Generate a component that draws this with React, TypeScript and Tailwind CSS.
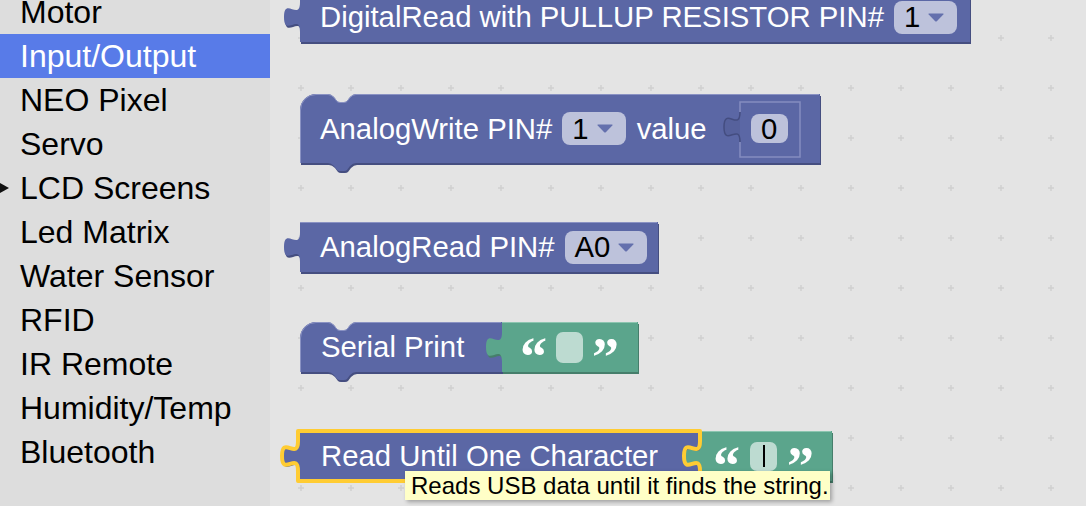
import React from "react";

type Hole = { x: number; y: number; w: number; h: number };
type ShapeOpts = {
  w: number;
  h: number;
  output?: boolean;
  prev?: boolean;
  next?: boolean;
  rightTab?: boolean;
  hole?: Hole;
};
type Palette = { fill: string; dark: string; light: string };

const PURPLE: Palette = { fill: "#5b67a5", dark: "#454e80", light: "#8a92c3" };
const GREEN: Palette = { fill: "#5ba58c", dark: "#467e6b", light: "#8cc5b0" };

// room on the left of each svg for the output tab
const X = 16;

const outline = (o: ShapeOpts) => {
  const { w, h } = o;
  let d = "";
  let top = "";
  if (o.prev) {
    const notch = (y: number) =>
      `H ${X + 28} Q ${X + 31},${y} ${X + 34},${y + 3} L ${X + 37},${y + 7} Q ${X + 38},${y + 8} ${X + 40},${y + 8} H ${X + 44} Q ${X + 46},${y + 8} ${X + 47},${y + 7} L ${X + 50},${y + 3} Q ${X + 53},${y} ${X + 56},${y}`;
    d += `M ${X},16 A 16,16 0 0 1 ${X + 16},0 ${notch(0)}`;
    top = `M ${X + 0.5},${h} V 16 A 15.5,15.5 0 0 1 ${X + 16},0.5 ${notch(0.5)} H ${X + w - 1}`;
  } else {
    d += `M ${X},0`;
    top = `M ${X},0.5 H ${X + w - 1}`;
  }
  d += ` H ${X + w}`;
  if (o.rightTab) {
    const r = X + w;
    d += ` V 10 C ${r},30 ${r - 16},4 ${r - 16},25 C ${r - 16},46 ${r},20 ${r},40`;
  }
  d += ` V ${h}`;
  if (o.next) {
    d += ` H ${X + 56} Q ${X + 53},${h} ${X + 50},${h + 3} L ${X + 47},${h + 7} Q ${X + 46},${h + 8} ${X + 44},${h + 8} H ${X + 40} Q ${X + 38},${h + 8} ${X + 37},${h + 7} L ${X + 34},${h + 3} Q ${X + 31},${h} ${X + 28},${h}`;
  }
  d += ` H ${X}`;
  if (o.output) d += ` V 40 C ${X},20 0,46 0,25 C 0,4 ${X},30 ${X},10`;
  d += " Z";
  return { d, top };
};

const Shape = ({ o, c, selected }: { o: ShapeOpts; c: Palette; selected?: boolean }) => {
  const { d, top } = outline(o);
  const hl = o.hole;
  return (
    <svg
      className="absolute top-0 left-[-16px] overflow-visible pointer-events-none"
      width={o.w + X + 4}
      height={o.h + 12}
    >
      <path d={d} fill={c.dark} transform="translate(1,2)" />
      <path d={d} fill={c.fill} />
      <path d={top} fill="none" stroke={c.light} strokeWidth={1} />
      {hl && (
        <>
          <path
            d={`M ${X + hl.x},${hl.y + 10} V ${hl.y} H ${X + hl.x + hl.w} V ${hl.y + hl.h} H ${X + hl.x} V ${hl.y + 40}`}
            fill="none"
            stroke="#858dc0"
            strokeWidth={1.5}
          />
          <path
            d={`M ${X + hl.x},${hl.y + 40} C ${X + hl.x},${hl.y + 20} ${X + hl.x - 16},${hl.y + 46} ${X + hl.x - 16},${hl.y + 25} C ${X + hl.x - 16},${hl.y + 4} ${X + hl.x},${hl.y + 30} ${X + hl.x},${hl.y + 10}`}
            fill="#56619c"
            stroke="#444d80"
            strokeWidth={1.5}
          />
        </>
      )}
      {selected && (
        <path d={d} fill="none" stroke="#ffcc33" strokeWidth={4} strokeLinejoin="round" />
      )}
    </svg>
  );
};

const Arrow = () => (
  <svg width="16" height="9" viewBox="0 0 16 9">
    <path d="M1,0.5 H15 Q16,0.5 15.3,1.4 L8.8,8.2 Q8,9 7.2,8.2 L0.7,1.4 Q0,0.5 1,0.5 Z" fill="#6470ad" />
  </svg>
);

const Dropdown = ({ value, className = "" }: { value: string; className?: string }) => (
  <div
    className={`flex items-center h-[33px] rounded-[8px] bg-[#bdc2db] pl-[10px] pr-[13px] gap-[8px] text-black ${className}`}
  >
    <span className="text-[29.3px] leading-none">{value}</span>
    <Arrow />
  </div>
);

const Quote = ({ ch }: { ch: string }) => (
  <span className="font-['Liberation_Serif',serif] font-bold text-[54px] leading-none text-white translate-y-[10px]">
    {ch}
  </span>
);

const categories = [
  "Motor",
  "Input/Output",
  "NEO Pixel",
  "Servo",
  "LCD Screens",
  "Led Matrix",
  "Water Sensor",
  "RFID",
  "IR Remote",
  "Humidity/Temp",
  "Bluetooth",
];

const Sidebar = () => (
  <div className="w-[270px] h-full bg-[#dddddd] flex flex-col shrink-0">
    <div className="flex flex-col -mt-[10px]">
      {categories.map((cat) => (
        <div
          key={cat}
          className={`h-[44px] flex items-center text-[32px] leading-none ${
            cat === "Input/Output" ? "bg-[#587be8] text-white" : "text-black"
          }`}
        >
          <div className="w-[20px] h-full flex items-center">
            {cat === "LCD Screens" && (
              <svg width="9" height="10" viewBox="0 0 9 10">
                <polygon points="0,0 9,5 0,10" fill="#111" />
              </svg>
            )}
          </div>
          <span>{cat}</span>
        </div>
      ))}
    </div>
  </div>
);

const Grid = () => (
  <svg className="absolute inset-0 w-full h-full">
    <defs>
      <pattern id="plus" width="50" height="50" patternUnits="userSpaceOnUse">
        <path d="M28,38 H34 M31,35 V41" stroke="#d1d1d1" strokeWidth="1.5" />
      </pattern>
    </defs>
    <rect width="100%" height="100%" fill="url(#plus)" />
  </svg>
);

export default function App() {
  const b1: ShapeOpts = { w: 670, h: 50, output: true };
  const b2: ShapeOpts = { w: 520, h: 69, prev: true, next: true, hole: { x: 440, y: 8, w: 60, h: 55 } };
  const b3: ShapeOpts = { w: 358, h: 50, output: true };
  const b4: ShapeOpts = { w: 202, h: 50, prev: true, next: true };
  const b4g: ShapeOpts = { w: 136, h: 50, output: true };
  const b5: ShapeOpts = { w: 402, h: 50, output: true, rightTab: true };
  const b5g: ShapeOpts = { w: 132, h: 50, output: true };

  return (
    <div className="w-[1086px] h-[506px] flex overflow-hidden font-['Liberation_Sans',Arial,sans-serif]">
      <Sidebar />
      <div className="relative flex-1 h-full bg-[#e4e4e4] overflow-hidden">
        <Grid />

        {/* DigitalRead */}
        <div className="absolute left-[30px] top-[-8px] w-[670px] h-[50px]">
          <Shape o={b1} c={PURPLE} />
          <div className="relative h-full flex items-center pl-[20px] text-white text-[29.3px] leading-none">
            <span>DigitalRead with PULLUP RESISTOR PIN#</span>
            <Dropdown value="1" className="ml-[10px]" />
          </div>
        </div>

        {/* AnalogWrite */}
        <div className="absolute left-[30px] top-[94px] w-[520px] h-[69px]">
          <Shape o={b2} c={PURPLE} />
          <div className="relative h-full flex items-center pl-[20px] text-white text-[29.3px] leading-none">
            <span>AnalogWrite PIN#</span>
            <Dropdown value="1" className="ml-[10px]" />
            <span className="ml-[11px]">value</span>
            <div className="ml-[44px] w-[37px] h-[29px] rounded-[8px] bg-[#bdc2db] flex items-center justify-center text-black">
              0
            </div>
          </div>
        </div>

        {/* AnalogRead */}
        <div className="absolute left-[30px] top-[222px] w-[358px] h-[50px]">
          <Shape o={b3} c={PURPLE} />
          <div className="relative h-full flex items-center pl-[20px] text-white text-[29.3px] leading-none">
            <span>AnalogRead PIN#</span>
            <Dropdown value="A0" className="ml-[10px]" />
          </div>
        </div>

        {/* Serial Print */}
        <div className="absolute left-[30px] top-[322px] w-[202px] h-[50px]">
          <Shape o={b4} c={PURPLE} />
          <div className="relative h-full flex items-center pl-[21px] text-white text-[29.3px] leading-none">
            <span>Serial Print</span>
          </div>
        </div>
        <div className="absolute left-[232px] top-[322px] w-[136px] h-[50px]">
          <Shape o={b4g} c={GREEN} />
          <div className="relative h-full flex items-center pl-[18px] gap-[9px]">
            <Quote ch="“" />
            <div className="w-[27px] h-[31px] rounded-[7px] bg-[#bddbd1]" />
            <Quote ch="”" />
          </div>
        </div>

        {/* Read Until One Character (selected) */}
        <div className="absolute left-[430px] top-[431px] w-[132px] h-[50px]">
          <Shape o={b5g} c={GREEN} />
          <div className="relative h-full flex items-center pl-[13px] gap-[10px]">
            <Quote ch="“" />
            <div className="w-[27px] h-[29px] rounded-[7px] bg-[#bddbd1] flex items-center justify-center">
              <div className="w-[2px] h-[22px] bg-black" />
            </div>
            <Quote ch="”" />
          </div>
        </div>
        <div className="absolute left-[28px] top-[431px] w-[402px] h-[50px]">
          <Shape o={b5} c={PURPLE} selected />
          <div className="relative h-full flex items-center pl-[23px] text-white text-[29.3px] leading-none">
            <span>Read Until One Character</span>
          </div>
        </div>

        {/* tooltip */}
        <div className="absolute left-[135px] top-[471px] w-[425px] h-[29px] bg-[#ffffc7] shadow-[2px_2px_4px_rgba(0,0,0,0.3)] flex items-center pl-[6px] text-[24px] leading-none text-black">
          Reads USB data until it finds the string.
        </div>
      </div>
    </div>
  );
}
